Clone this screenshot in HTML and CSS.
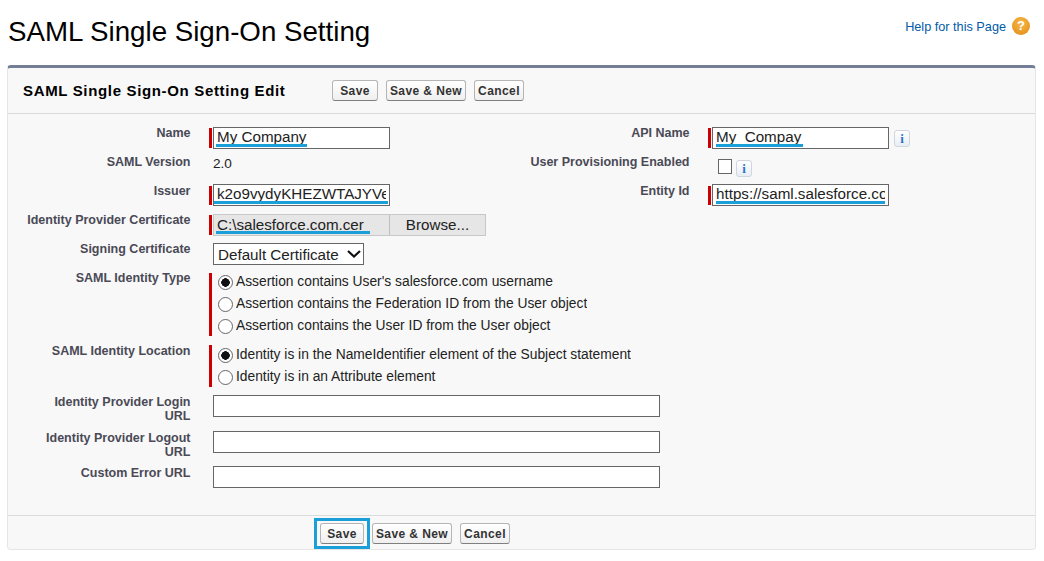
FILE: index.html
```html
<!DOCTYPE html>
<html lang="en">
<head>
    <meta charset="UTF-8">
    <meta name="viewport" content="width=device-width, initial-scale=1.0">
    <title>SAML Single Sign-On Setting</title>
    <link rel="stylesheet" href="styles.css">
</head>
<body>
    <header class="page-head">
        <h1>SAML Single Sign-On Setting</h1>
        <a class="help-link" href="#">Help for this Page <span class="help-icon">?</span></a>
    </header>

    <form class="panel">
        <div class="panel-head">
            <h2>SAML Single Sign-On Setting Edit</h2>
            <div class="buttons">
                <button type="button" class="btn btn-save">Save</button>
                <button type="button" class="btn btn-new">Save &amp; New</button>
                <button type="button" class="btn btn-cancel">Cancel</button>
            </div>
        </div>

        <div class="form-grid">
            <!-- Name / API name -->
            <label class="label">Name</label>
            <div class="field">
                <span class="req"></span>
                <input type="text" class="input input-short" value="My Company">
                <span class="mark mark-name"></span>
            </div>
            <label class="label">API Name</label>
            <div class="field">
                <span class="req"></span>
                <input type="text" class="input input-short" value="My_Compay">
                <span class="mark mark-api"></span>
                <span class="info info-api">i</span>
            </div>

            <!-- Version / provisioning -->
            <label class="label">SAML Version</label>
            <div class="field value">2.0</div>
            <label class="label">User Provisioning Enabled</label>
            <div class="field check-field">
                <input type="checkbox" class="check">
                <span class="info">i</span>
            </div>

            <!-- Issuer / entity -->
            <label class="label label-low">Issuer</label>
            <div class="field field-low">
                <span class="req"></span>
                <input type="text" class="input input-short" value="k2o9vydyKHEZWTAJYVe">
                <span class="mark mark-issuer"></span>
            </div>
            <label class="label label-low">Entity Id</label>
            <div class="field field-low">
                <span class="req"></span>
                <input type="text" class="input input-short" value="https://saml.salesforce.com">
                <span class="mark mark-entity"></span>
            </div>

            <!-- Certificates -->
            <label class="label">Identity Provider Certificate</label>
            <div class="field span">
                <span class="req"></span>
                <div class="file">
                    <span class="file-name">C:\salesforce.com.cer</span>
                    <span class="file-btn">Browse...</span>
                </div>
                <span class="mark mark-cert"></span>
            </div>

            <label class="label">Signing Certificate</label>
            <div class="field span">
                <select class="select">
                    <option>Default Certificate</option>
                </select>
            </div>

            <!-- Identity type -->
            <label class="label label-low">SAML Identity Type</label>
            <div class="field span field-type">
                <div class="radios">
                    <label class="radio-line"><input type="radio" name="idType" class="radio" checked>Assertion contains User's salesforce.com username</label>
                    <label class="radio-line"><input type="radio" name="idType" class="radio">Assertion contains the Federation ID from the User object</label>
                    <label class="radio-line"><input type="radio" name="idType" class="radio">Assertion contains the User ID from the User object</label>
                </div>
            </div>

            <label class="label">SAML Identity Location</label>
            <div class="field span">
                <div class="radios radios-loc">
                    <label class="radio-line"><input type="radio" name="idLoc" class="radio" checked>Identity is in the NameIdentifier element of the Subject statement</label>
                    <label class="radio-line"><input type="radio" name="idLoc" class="radio">Identity is in an Attribute element</label>
                </div>
            </div>

            <!-- URLs -->
            <label class="label label-wrap">Identity Provider Login URL</label>
            <div class="field span"><input type="text" class="input input-long"></div>
            <label class="label label-wrap">Identity Provider Logout URL</label>
            <div class="field span"><input type="text" class="input input-long"></div>
            <label class="label label-low">Custom Error URL</label>
            <div class="field span"><input type="text" class="input input-long"></div>
        </div>

        <div class="panel-foot">
            <div class="highlight">
                <button type="button" class="btn btn-save-foot">Save</button>
            </div>
            <button type="button" class="btn btn-new">Save &amp; New</button>
            <button type="button" class="btn btn-cancel">Cancel</button>
        </div>
    </form>
</body>
</html>
```

FILE: styles.css
```css
body {
    margin: 0;
    background: #fff;
    font-family: "Liberation Sans", Arial, sans-serif;
    color: #222;
}
.page-head {
    height: 65px;
    display: flex;
    justify-content: space-between;
    padding: 0 14px 0 8px;
}
h1 {
    margin: 16px 0 0;
    font-size: 27.7px;
    line-height: 32px;
    font-weight: normal;
    color: #000;
}
.help-link {
    display: flex;
    align-items: center;
    gap: 6px;
    height: 20px;
    margin-top: 17px;
    font-size: 12.7px;
    color: #015ba7;
    text-decoration: none;
}
.help-icon {
    width: 18px;
    height: 18px;
    margin-top: -3px;
    border-radius: 50%;
    background: radial-gradient(circle at 50% 35%, #f7b84a, #e08a12);
    color: #fff;
    font-size: 13px;
    font-weight: bold;
    line-height: 18px;
    text-align: center;
}
.panel {
    margin: 0 8px 0 7px;
    height: 485px;
    box-sizing: border-box;
    display: flex;
    flex-direction: column;
    background: #f8f8f8;
    border: 1px solid #e6e6e6;
    border-top: 3px solid #747e96;
    border-radius: 4px;
}
.panel-head {
    height: 46px;
    flex: none;
    box-sizing: border-box;
    display: flex;
    align-items: center;
    padding-left: 15px;
    border-bottom: 1px solid #dbdbdb;
}
h2 {
    width: 309px;
    margin: 0;
    font-size: 15px;
    letter-spacing: 0.66px;
    white-space: nowrap;
    color: #000;
}
.buttons {
    display: flex;
    gap: 8px;
}
.btn {
    box-sizing: border-box;
    height: 21px;
    padding: 0;
    border: 1px solid #b5b5b5;
    border-bottom-color: #7f7f7f;
    border-radius: 3px;
    background: linear-gradient(#fff, #efefef);
    font-family: inherit;
    font-size: 12px;
    font-weight: bold;
    letter-spacing: 0.4px;
    color: #333;
}
.btn-save { width: 46px; }
.btn-new { width: 80px; }
.btn-cancel { width: 50px; }
.btn-save-foot { width: 44px; }

.form-grid {
    flex: 1;
    display: grid;
    grid-template-columns: 201px 320px 179px 1fr;
    grid-template-rows: 29px 28px 30px 29px 28px 74px 50px 36px 35px 27px;
    align-content: start;
    padding-top: 13px;
}
.label {
    padding-right: 18.5px;
    font-size: 12.5px;
    font-weight: bold;
    line-height: 13px;
    color: #4a4a56;
    text-align: right;
}
.label-low {
    padding-top: 1px;
}
.label-wrap {
    padding-left: 30px;
    line-height: 14px;
}
.field {
    position: relative;
    display: flex;
    align-items: flex-start;
    font-size: 15.2px;
}
.span {
    grid-column: 2 / 5;
}
.value {
    padding: 0 0 0 4px;
    font-size: 13.6px;
    line-height: 15px;
}
.req {
    flex: none;
    width: 3px;
    height: 20px;
    margin: 1px 1px 0 0;
    background: #c00;
}
.input {
    box-sizing: border-box;
    height: 22px;
    padding: 0 3px 3px;
    border: 1px solid #666;
    border-radius: 0;
    background: #fff;
    font-family: inherit;
    font-size: 15.2px;
    color: #222;
}
.input-short {
    width: 177px;
}
.input-long {
    width: 447px;
    margin-left: 4px;
}
.mark {
    position: absolute;
    height: 3px;
    background: #1a9fd9;
}
.mark-name { left: 7px; top: 17px; width: 91px; }
.mark-api { left: 8px; top: 17px; width: 87px; }
.mark-issuer { left: 5px; top: 17px; width: 174px; }
.mark-entity { left: 8px; top: 17px; width: 169px; }
.mark-cert { left: 7px; top: 17px; width: 154px; }

.info {
    box-sizing: border-box;
    width: 16px;
    height: 17px;
    margin: 3px 0 0 5px;
    border: 1px solid #cfd6de;
    border-radius: 3px;
    background: linear-gradient(#fff, #e8eef4);
    font-family: "Liberation Serif", serif;
    font-size: 13px;
    font-weight: bold;
    line-height: 15px;
    text-align: center;
    color: #2a74c9;
}
.check-field {
    padding: 3px 0 0 10px;
}
.check {
    appearance: none;
    box-sizing: border-box;
    width: 14px;
    height: 15px;
    margin: 0;
    border: 1px solid #666;
    background: #fff;
}
.check-field .info {
    margin: 1px 0 0 4px;
}
.field-low .req {
    margin-top: 2px;
    height: 19px;
}
.file {
    display: flex;
    height: 22px;
    box-sizing: border-box;
    border: 1px solid #c8c8c8;
    background: #e6e6e6;
}
.file-name {
    width: 172px;
    padding-left: 3px;
    line-height: 19px;
    white-space: nowrap;
}
.file-btn {
    width: 95px;
    border-left: 1px solid #bdbdbd;
    text-align: center;
    line-height: 19px;
}
.select {
    appearance: none;
    box-sizing: border-box;
    width: 151px;
    height: 22px;
    margin-left: 4px;
    padding: 0 0 0 4px;
    border: 1px solid #666;
    border-radius: 0;
    background: #fff url("data:image/svg+xml,%3Csvg xmlns='http://www.w3.org/2000/svg' width='14' height='8'%3E%3Cpath d='M1 1l6 5.5L13 1' fill='none' stroke='%23111' stroke-width='2.2'/%3E%3C/svg%3E") no-repeat right 2px center;
    font-family: inherit;
    font-size: 15.2px;
    color: #222;
}
.field-type {
    padding-top: 2px;
}
.radios {
    overflow: hidden;
    padding-left: 6px;
    border-left: 3px solid #c00;
    font-size: 13.8px;
}
.radio-line {
    display: flex;
    align-items: center;
    gap: 3px;
    height: 22px;
}
.radio-line:first-child {
    margin-top: -3px;
}
.radios-loc .radio-line:first-child {
    margin-top: -2px;
}
.radio {
    appearance: none;
    box-sizing: border-box;
    width: 15px;
    height: 15px;
    margin: 2px 0 0;
    border: 1px solid #666;
    border-radius: 50%;
    background: #fff;
}
.radio:checked {
    background: radial-gradient(circle, #111 0 4px, #fff 4.5px);
}
.panel-foot {
    height: 34px;
    flex: none;
    box-sizing: border-box;
    display: flex;
    align-items: center;
    gap: 8px;
    padding: 2px 0 0 306px;
    border-top: 1px solid #dbdbdb;
}
.highlight {
    display: flex;
    margin-right: -6px;
    padding: 2px 3px;
    border: 3px solid #1a9fd9;
}
```
